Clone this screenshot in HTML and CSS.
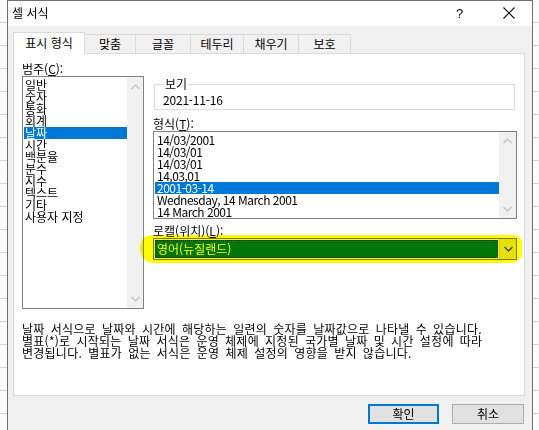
FILE: index.html
```html
<!DOCTYPE html>
<html lang="ko">
<head>
<meta charset="utf-8">
<title>셀 서식</title>
<link rel="stylesheet" href="styles.css">
</head>
<body>
<div class="dialog">
  <div class="titlebar">
    <span class="title">셀 서식</span>
    <span class="help">?</span>
    <svg class="close" width="14" height="14" viewBox="0 0 14 14"><path d="M1.5 1.5 L12.5 12.5 M12.5 1.5 L1.5 12.5" stroke="#111" stroke-width="1.1" fill="none"/></svg>
  </div>
  <div class="body">
    <div class="tabs">
      <div class="tab active t1">표시 형식</div>
      <div class="tab t2">맞춤</div>
      <div class="tab t3">글꼴</div>
      <div class="tab t4">테두리</div>
      <div class="tab t5">채우기</div>
      <div class="tab t6">보호</div>
    </div>
    <div class="panel">
      <div class="columns">
        <div class="left">
          <div class="label">범주(<u>C</u>):</div>
          <div class="listbox cat">
            <div class="items">
              <div class="item">일반</div>
              <div class="item">숫자</div>
              <div class="item">통화</div>
              <div class="item">회계</div>
              <div class="item sel">날짜</div>
              <div class="item">시간</div>
              <div class="item">백분율</div>
              <div class="item">분수</div>
              <div class="item">지수</div>
              <div class="item">텍스트</div>
              <div class="item">기타</div>
              <div class="item">사용자 지정</div>
            </div>
            <div class="scrollbar">
              <svg class="chev" width="9" height="6" viewBox="0 0 9 6"><path d="M0.5 5 L4.5 1 L8.5 5" stroke="#c2c2c2" stroke-width="1.2" fill="none"/></svg>
              <svg class="chev" width="9" height="6" viewBox="0 0 9 6"><path d="M0.5 1 L4.5 5 L8.5 1" stroke="#c2c2c2" stroke-width="1.2" fill="none"/></svg>
            </div>
          </div>
        </div>
        <div class="right">
          <fieldset class="group">
            <legend>보기</legend>
            <div class="sample">2021-11-16</div>
          </fieldset>
          <div class="label fmt-label">형식(<u>T</u>):</div>
          <div class="listbox fmt">
            <div class="items">
              <div class="item">14/03/2001</div>
              <div class="item">14/03/01</div>
              <div class="item">14/03/01</div>
              <div class="item">14,03,01</div>
              <div class="item sel">2001-03-14</div>
              <div class="item">Wednesday, 14 March 2001</div>
              <div class="item">14 March 2001</div>
            </div>
            <div class="scrollbar">
              <svg class="chev" width="9" height="6" viewBox="0 0 9 6"><path d="M0.5 5 L4.5 1 L8.5 5" stroke="#c2c2c2" stroke-width="1.2" fill="none"/></svg>
              <svg class="chev" width="9" height="6" viewBox="0 0 9 6"><path d="M0.5 1 L4.5 5 L8.5 1" stroke="#c2c2c2" stroke-width="1.2" fill="none"/></svg>
            </div>
          </div>
          <div class="label loc-label">로캘(위치)(<u>L</u>):</div>
          <div class="combo">
            <div class="combo-value"><span class="focus">영어(뉴질랜드)</span></div>
            <div class="combo-btn">
              <svg width="9" height="6" viewBox="0 0 9 6"><path d="M0.5 1 L4.5 5 L8.5 1" stroke="#333" stroke-width="1.1" fill="none"/></svg>
            </div>
            <div class="marker"></div>
          </div>
        </div>
      </div>
      <p class="desc">날짜 서식으로 날짜와 시간에 해당하는 일련의 숫자를 날짜값으로 나타낼 수 있습니다.<br>별표(*)로 시작되는 날짜 서식은 운영 체제에 지정된 국가별 날짜 및 시간 설정에 따라<br>변경됩니다. 별표가 없는 서식은 운영 체제 설정의 영향을 받지 않습니다.</p>
    </div>
    <div class="buttons">
      <button class="btn ok">확인</button>
      <button class="btn cancel">취소</button>
    </div>
  </div>
</div>
</body>
</html>
```

FILE: styles.css
```css
* { box-sizing: border-box; }

html, body {
  margin: 0;
  padding: 0;
}

body {
  width: 539px;
  height: 430px;
  overflow: hidden;
  font-family: "Noto Sans CJK KR", "Noto Sans", sans-serif;
  font-size: 12px;
  color: #000;
  background: repeating-linear-gradient(to bottom, #fbfbfb 0 22px, #d6d6d6 22px 23px);
}

.dialog {
  margin-left: 7px;
  width: 526px;
  height: 431px;
  border: 1px solid #6f6f6f;
  background: #f0f0f0;
  display: flex;
  flex-direction: column;
}

.titlebar {
  height: 25px;
  background: #fff;
  display: flex;
  align-items: center;
  padding-left: 4px;
  padding-bottom: 1px;
}

.title {
  font-size: 12px;
  line-height: 14px;
  flex: 1;
}

.help {
  font-family: "Liberation Sans", sans-serif;
  font-size: 13px;
  width: 10px;
  margin-right: 36px;
}

.close {
  margin-right: 16px;
}

.body {
  flex: 1;
  display: flex;
  flex-direction: column;
}

.tabs {
  display: flex;
  align-items: flex-end;
  height: 21px;
  margin-top: 6px;
  padding-left: 5px;
  position: relative;
  z-index: 1;
}

.tab {
  height: 19px;
  border: 1px solid #d9d9d9;
  border-bottom: none;
  background: #f0f0f0;
  margin-left: -1px;
  text-align: center;
  line-height: 17px;
  font-size: 12px;
}

.tab.active {
  height: 22px;
  margin-bottom: -1px;
  background: #fff;
  line-height: 20px;
  margin-left: 0;
}

.t1 { width: 72px; }
.t2 { width: 52px; }
.t3 { width: 56px; }
.t4 { width: 54px; }
.t5 { width: 56px; }
.t6 { width: 53px; }

.panel {
  margin: 0 7px 0 5px;
  height: 343px;
  border: 1px solid #d9d9d9;
  background: #fff;
  padding: 8px 0 0 8px;
}

.columns {
  display: flex;
  align-items: flex-start;
}

.left {
  width: 122px;
}

.right {
  width: 364px;
  margin-left: 9px;
}

.label {
  line-height: 14px;
  height: 14px;
  white-space: nowrap;
}

.label u {
  text-decoration: underline;
  text-underline-offset: 1px;
}

.listbox {
  border: 1px solid #828282;
  background: #fff;
  display: flex;
}

.listbox .items {
  flex: 1;
  padding-top: 2px;
}

.item {
  height: 12px;
  line-height: 12px;
  margin-left: 1px;
  padding-left: 1px;
  white-space: nowrap;
}

.item.sel {
  background: #0078d7;
  color: #fff;
}

.scrollbar {
  background: #f0f0f0;
  display: flex;
  flex-direction: column;
  justify-content: space-between;
  align-items: center;
  padding: 7px 0 6px;
}

.cat {
  height: 233px;
}

.cat .scrollbar {
  width: 16px;
}

.group {
  margin: 15px 2px 0 1px;
  padding: 0 0 2px 8px;
  border: 1px solid #dcdcdc;
  min-width: 0;
}

.group legend {
  padding: 0 1px;
  margin-left: 1px;
  line-height: 14px;
}

.sample {
  line-height: 14px;
  padding-top: 2px;
  letter-spacing: -0.2px;
}

.fmt-label {
  margin-top: 7px;
}

.fmt {
  height: 88px;
}

.fmt .scrollbar {
  width: 17px;
  padding: 6px 0 6px;
}

.fmt .item {
  padding-left: 2px;
  letter-spacing: -0.5px;
}

.loc-label {
  margin-top: 5px;
}

.combo {
  position: relative;
  height: 22px;
  border: 1px solid #7a7a7a;
  background: #fff;
  display: flex;
}

.combo-value {
  flex: 1;
  padding: 1px;
}

.focus {
  display: block;
  height: 18px;
  background: #0078d7;
  color: #fff;
  outline: 1px dotted #222;
  outline-offset: -1px;
  line-height: 17px;
  padding-left: 2px;
}

.combo-btn {
  width: 17px;
  background: #e5e5e5;
  border-left: 1px solid #cfcfcf;
  display: flex;
  align-items: center;
  justify-content: center;
}

.marker {
  position: absolute;
  left: -14px;
  top: -4px;
  width: 382px;
  height: 28px;
  border-radius: 12px 8px 10px 14px;
  background: #fffa00;
  mix-blend-mode: multiply;
  opacity: 0.95;
}

.desc {
  margin: 14px 0 0;
  line-height: 12px;
  letter-spacing: 0.25px;
  word-spacing: 2.5px;
  white-space: nowrap;
}

.buttons {
  display: flex;
  justify-content: flex-end;
  gap: 13px;
  margin-top: 8px;
  padding-right: 8px;
}

.btn {
  height: 20px;
  font-family: "Noto Sans CJK KR", sans-serif;
  font-size: 12px;
  line-height: 16px;
  background: #e1e1e1;
  border: 1px solid #adadad;
  padding: 0;
  color: #000;
}

.ok {
  width: 71px;
  border-color: #0078d7;
  box-shadow: inset 0 0 0 1px #0078d7;
}

.cancel {
  width: 72px;
}
```
